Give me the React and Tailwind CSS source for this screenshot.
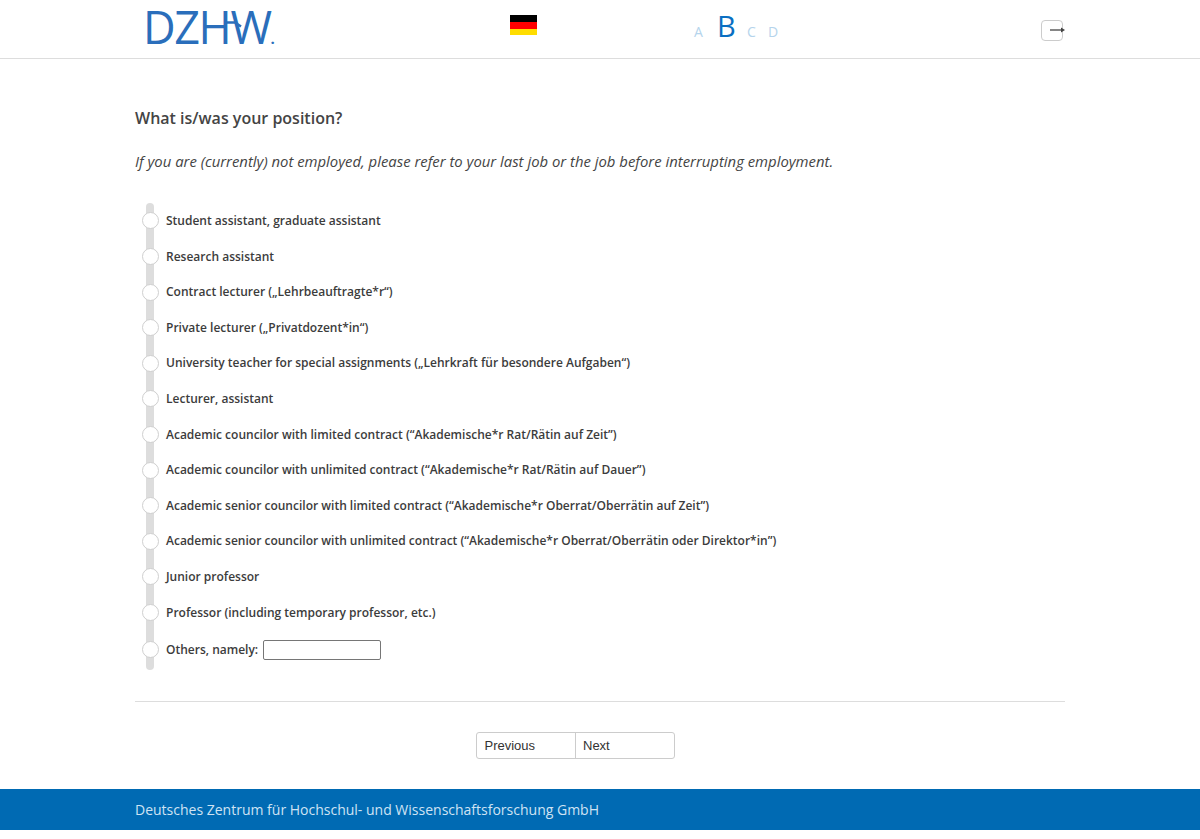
const options = [
  'Student assistant, graduate assistant',
  'Research assistant',
  'Contract lecturer („Lehrbeauftragte*r“)',
  'Private lecturer („Privatdozent*in“)',
  'University teacher for special assignments („Lehrkraft für besondere Aufgaben“)',
  'Lecturer, assistant',
  'Academic councilor with limited contract (“Akademische*r Rat/Rätin auf Zeit”)',
  'Academic councilor with unlimited contract (“Akademische*r Rat/Rätin auf Dauer”)',
  'Academic senior councilor with limited contract (“Akademische*r Oberrat/Oberrätin auf Zeit”)',
  'Academic senior councilor with unlimited contract (“Akademische*r Oberrat/Oberrätin oder Direktor*in”)',
  'Junior professor',
  'Professor (including temporary professor, etc.)',
];

const Radio = () => (
  <span className="w-[17px] h-[17px] shrink-0 rounded-full bg-white border border-[#cfcfcf]" />
);

const Logo = () => (
  <div className="relative w-[375px] pl-[8px] h-full">
    <span className="block whitespace-nowrap text-[45px] leading-[54px] text-[#2a6ebb] tracking-[-1.4px] font-[380]">
      DZHW<span className="text-[15px] font-bold tracking-normal">.</span>
    </span>
    {/* crossbar that ties the H into the W */}
    <svg className="absolute left-[90px] top-[17px]" width="24" height="16" viewBox="0 0 24 16">
      <path d="M0 5.5h10l6 4" fill="none" stroke="#2a6ebb" strokeWidth="2.6" />
    </svg>
  </div>
);

const App = () => {
  return (
    <div className="min-h-[839px] bg-white text-[#444] font-['Open_Sans',sans-serif]">
      <header className="h-[59px] border-b border-[#dddddd]">
        <div className="relative w-[930px] mx-auto h-full flex">
          <Logo />
          <div className="w-[184px] pt-[15px]">
            <div className="w-[27px] h-[20px] flex flex-col">
              <div className="h-[7px] bg-black" />
              <div className="h-[7px] bg-[#ff0000]" />
              <div className="h-[6px] bg-[#ffdd00]" />
            </div>
          </div>
          <div className="flex items-baseline h-[40px] pt-[9px] text-[#b5d4ec] text-[14px]">
            <span className="w-[23px]">A</span>
            <span className="w-[30px] text-[29px] leading-[34px] font-medium text-[#0a6fc2]">B</span>
            <span className="w-[21px]">C</span>
            <span>D</span>
          </div>
          <div className="ml-auto mt-[20px] w-[24px] h-[21px] relative">
            <div className="w-[22px] h-[21px] rounded-[4px] border border-[#cccccc]" />
            <svg className="absolute left-[9px] top-[6px]" width="16" height="8" viewBox="0 0 16 8">
              <path d="M0 4h12" stroke="#444" strokeWidth="1.3" />
              <path d="M11 1.5 15 4l-4 2.5z" fill="#444" />
            </svg>
          </div>
        </div>
      </header>

      <main className="w-[930px] mx-auto">
        <h1 className="mt-[48px] text-[16px] leading-[22px] font-semibold text-[#444]">What is/was your position?</h1>
        <p className="mt-[21px] text-[14.87px] leading-[22px] italic text-[#444]">
          If you are (currently) not employed, please refer to your last job or the job before interrupting employment.
        </p>

        <div className="relative mt-[31px] h-[467px]">
          <div className="absolute left-[11px] top-0 bottom-0 w-[8px] rounded-[4px] bg-[#dddddd]" />
          <div className="relative pl-[7px] pt-[0.2px]">
            {options.map((label) => (
              <label key={label} className="flex items-center gap-[7px] h-[35.6px] text-[12px] font-semibold text-[#3c3c3c]">
                <Radio />
                <span>{label}</span>
              </label>
            ))}
            <label className="flex items-center gap-[7px] h-[39px] text-[12px] font-semibold text-[#3c3c3c]">
              <Radio />
              <span>Others, namely:</span>
              <input type="text" className="-ml-[2px] w-[118px] h-[20px] rounded-[2px] border border-[#767676] bg-white" />
            </label>
          </div>
        </div>

        <div className="mt-[31px] border-t border-[#dddddd]" />

        <div className="mt-[30px] ml-[341px]">
          <div className="flex w-[199px] h-[27px] rounded-[3px] border border-[#cccccc] text-[13px] font-['Liberation_Sans',Arial,sans-serif] text-[#333]">
            <button type="button" className="w-[99px] text-left pl-[7.5px] border-r border-[#cccccc]">Previous</button>
            <button type="button" className="flex-1 text-left pl-[7px]">Next</button>
          </div>
        </div>
      </main>

      <footer className="mt-[30px] h-[41px] bg-[#006ab3]">
        <div className="w-[930px] mx-auto h-full flex items-center text-[14px] text-[#cfe3f3]">
          Deutsches Zentrum für Hochschul- und Wissenschaftsforschung GmbH
        </div>
      </footer>
    </div>
  );
};

export default App;
